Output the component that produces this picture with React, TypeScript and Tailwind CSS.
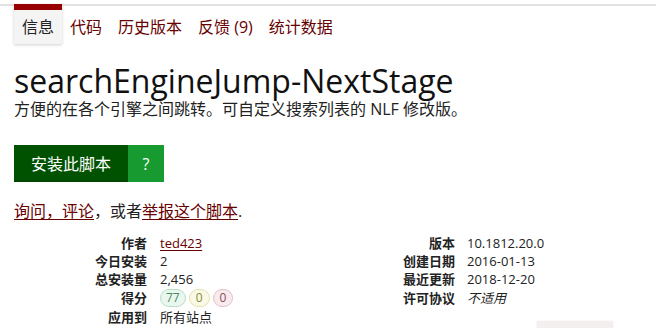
import React from "react";

const F = { fontFamily: '"Open Sans", "Noto Sans CJK SC", sans-serif' };

function Tab({ label, active }: { label: string; active?: boolean }) {
  if (active) {
    return (
      <div className="-mt-[2px] flex h-[40px] items-center border-t-[6px] border-[#990000] bg-[#f4f4f4] px-2 pb-[1px] text-[16px] text-[#222] shadow-[0_1px_3px_rgba(0,0,0,0.18)]">
        {label}
      </div>
    );
  }
  return (
    <div className="flex h-[38px] items-center px-2 pt-[4px] text-[16px] text-[#670000]">{label}</div>
  );
}

function Badge({ n, kind }: { n: string; kind: "good" | "ok" | "bad" }) {
  const cls =
    kind === "good"
      ? "border-[#b9e0c6] bg-[#e9f7ef] text-[#4a8a5f] px-[5px]"
      : kind === "ok"
      ? "border-[#e4e4b0] bg-[#f9f9e6] text-[#8a8a3a] px-[6px]"
      : "border-[#e6c0c8] bg-[#f9eaee] text-[#8a4a5a] px-[6px]";
  return (
    <span className={`inline-flex h-[18px] items-center rounded-full border text-[12px] leading-none ${cls}`}>
      {n}
    </span>
  );
}

export default function App() {
  return (
    <div style={F} className="h-[328px] w-[656px] overflow-hidden bg-white text-[#222]">
      <div className="mt-[4px] border-t-2 border-[#e2e2e2] pl-[14px]">
        <div className="flex">
          <Tab label="信息" active />
          <Tab label="代码" />
          <Tab label="历史版本" />
          <Tab label="反馈 (9)" />
          <Tab label="统计数据" />
        </div>
      </div>
      <div className="pl-[14px]">
        <h2 className="mt-[20px] text-[32px] leading-[34px] text-[#111]">searchEngineJump-NextStage</h2>
        <p className="mt-[1px] text-[16px] leading-[20px] text-[#222]">
          方便的在各个引擎之间跳转。可自定义搜索列表的 NLF 修改版。
        </p>
        <div className="mt-[26px] flex h-[37px] w-fit">
          <div className="flex w-[114px] items-center justify-center bg-[#005200] text-[16px] text-white shadow-[inset_0_-2px_0_rgba(0,0,0,0.15)]">
            安装此脚本
          </div>
          <div className="flex w-[36px] items-center justify-center bg-[#179a30] text-[16px] text-white">?</div>
        </div>
        <p className="mt-[19px] text-[16px] leading-[20px] text-[#222]">
          <span className="text-[#670000] underline underline-offset-2">询问，评论</span>，或者
          <span className="text-[#670000] underline underline-offset-2">举报这个脚本</span>.
        </p>
        <div className="mt-[13px] flex text-[13px] leading-[18px]">
          <div className="grid w-[314px] grid-cols-[133px_1fr] gap-x-[13px]">
            <div className="text-right font-bold">作者</div>
            <div>
              <span className="text-[#670000] underline underline-offset-2">ted423</span>
            </div>
            <div className="text-right font-bold">今日安装</div>
            <div>2</div>
            <div className="text-right font-bold">总安装量</div>
            <div>2,456</div>
            <div className="flex h-[20px] items-center justify-end font-bold">得分</div>
            <div className="flex h-[20px] items-center gap-[3px]">
              <Badge n="77" kind="good" />
              <Badge n="0" kind="ok" />
              <Badge n="0" kind="bad" />
            </div>
            <div className="text-right font-bold">应用到</div>
            <div>所有站点</div>
          </div>
          <div className="grid h-fit w-[300px] grid-cols-[127px_1fr] gap-x-[12px]">
            <div className="text-right font-bold">版本</div>
            <div>10.1812.20.0</div>
            <div className="text-right font-bold">创建日期</div>
            <div>2016-01-13</div>
            <div className="text-right font-bold">最近更新</div>
            <div>2018-12-20</div>
            <div className="flex h-[20px] items-center justify-end font-bold">许可协议</div>
            <div className="flex h-[20px] items-center italic">不适用</div>
          </div>
        </div>
        <div className="-mt-[5px] ml-[523px] h-[10px] w-[76px] bg-[#f3efef] shadow-[0_0_2px_rgba(0,0,0,0.08)]" />
      </div>
    </div>
  );
}
